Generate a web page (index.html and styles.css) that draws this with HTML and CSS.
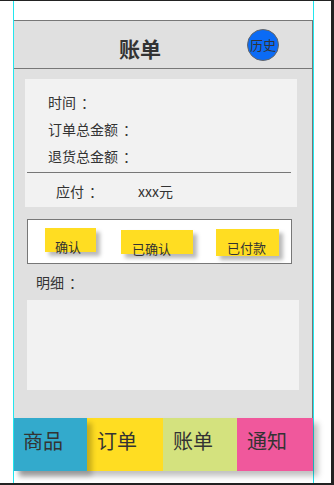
FILE: index.html
```html
<!DOCTYPE html>
<html lang="zh-CN">
<head>
<meta charset="utf-8">
<title>账单</title>
<link rel="stylesheet" href="styles.css">
</head>
<body>
<div class="screen">
  <div class="phone">
    <div class="panel">
      <header class="header">
        <h1 class="title">账单</h1>
        <button class="history">历史</button>
      </header>
      <section class="card">
        <div class="row">时间<span class="colon">：</span></div>
        <div class="row">订单总金额<span class="colon">：</span></div>
        <div class="row">退货总金额<span class="colon">：</span></div>
        <div class="divider"></div>
        <div class="pay"><span class="pay-label">应付<span class="colon">：</span></span><span>xxx元</span></div>
      </section>
      <div class="actions">
        <div class="btn btn-confirm">确认</div>
        <div class="btn btn-confirmed">已确认</div>
        <div class="btn btn-paid">已付款</div>
      </div>
      <div class="detail-label">明细<span class="colon">：</span></div>
      <div class="detail"></div>
    </div>
    <nav class="tabs">
      <div class="tab tab-goods">商品</div>
      <div class="tab tab-orders">订单</div>
      <div class="tab tab-bills">账单</div>
      <div class="tab tab-notice">通知</div>
    </nav>
  </div>
</div>
</body>
</html>
```
FILE: styles.css
```css
* { box-sizing: border-box; }
html, body { margin: 0; padding: 0; background: #fff; }
body {
  font-family: "Noto Sans CJK SC", "Noto Sans", sans-serif;
  color: #333;
}
.colon {
  padding-left: 5px;
}
.screen {
  width: 334px;
  height: 485px;
  border-top: 1px solid #222;
  border-right: 3px solid #222;
  border-bottom: 2px solid #222;
  background: #fff;
}
.phone {
  margin-left: 13px;
  width: 301px;
  height: 482px;
  border-left: 1px solid #22e6ee;
  border-right: 1px solid #22e6ee;
  padding-top: 19px;
}
.panel {
  width: 299px;
  height: 398px;
  background: #e0e0e0;
  border-top: 1px solid #777;
  border-right: 1px solid #777;
}
.header {
  display: flex;
  align-items: center;
  height: 48px;
  border-bottom: 1px solid #777;
}
.title {
  margin: 0;
  padding: 7px 0 0 105px;
  font-size: 21px;
  font-weight: bold;
  line-height: 28px;
  color: #333;
}
.history {
  margin: 0 33px 0 auto;
  width: 32px;
  height: 32px;
  padding: 0;
  border-radius: 50%;
  border: 1px solid #666;
  background: #0b6bf5;
  color: #333;
  font-family: inherit;
  font-size: 13px;
  line-height: 30px;
  text-align: center;
}
.card {
  margin: 10px 0 0 11px;
  width: 272px;
  height: 128px;
  background: #f2f2f2;
  padding-top: 10px;
  font-size: 14px;
}
.row {
  padding-left: 23px;
  line-height: 27px;
  height: 27px;
}
.divider {
  margin: 2px 6px 0 2px;
  border-top: 1px solid #777;
}
.pay {
  padding: 5px 0 0 31px;
  line-height: 27px;
}
.pay-label {
  display: inline-block;
  width: 82px;
}
.actions {
  display: flex;
  align-items: flex-start;
  margin: 12px 0 0 13px;
  width: 265px;
  height: 45px;
  background: #fff;
  border: 1px solid #777;
  padding-left: 17px;
  font-size: 13px;
}
.btn {
  background: #ffdd22;
  box-shadow: 4px 4px 4px rgba(0, 0, 0, 0.28);
  height: 24px;
  padding-top: 12px;
  padding-left: 11px;
  line-height: 13px;
  white-space: nowrap;
}
.btn-confirm { width: 51px; margin-top: 8px; padding-left: 10px; }
.btn-confirmed { width: 72px; margin-top: 10px; margin-left: 25px; }
.btn-paid { width: 63px; height: 27px; margin-top: 9px; margin-left: 23px; }
.detail-label {
  padding: 1px 0 0 22px;
  height: 36px;
  line-height: 35px;
  font-size: 14px;
}
.detail {
  margin-left: 13px;
  width: 272px;
  height: 90px;
  background: #f2f2f2;
}
.tabs {
  display: flex;
  width: 299px;
  height: 53px;
  box-shadow: 5px 5px 6px rgba(0, 0, 0, 0.25);
}
.tab {
  height: 53px;
  padding-left: 10px;
  font-size: 20px;
  line-height: 46px;
  color: #333;
}
.tab-goods {
  width: 73px;
  padding-left: 9px;
  background: #33aacc;
  position: relative;
  z-index: 1;
  box-shadow: 5px 5px 5px rgba(0, 0, 0, 0.22);
}
.tab-orders { width: 76px; background: #ffdd22; }
.tab-bills { width: 74px; background: #d4e27e; }
.tab-notice { width: 76px; background: #f0589c; }
```
